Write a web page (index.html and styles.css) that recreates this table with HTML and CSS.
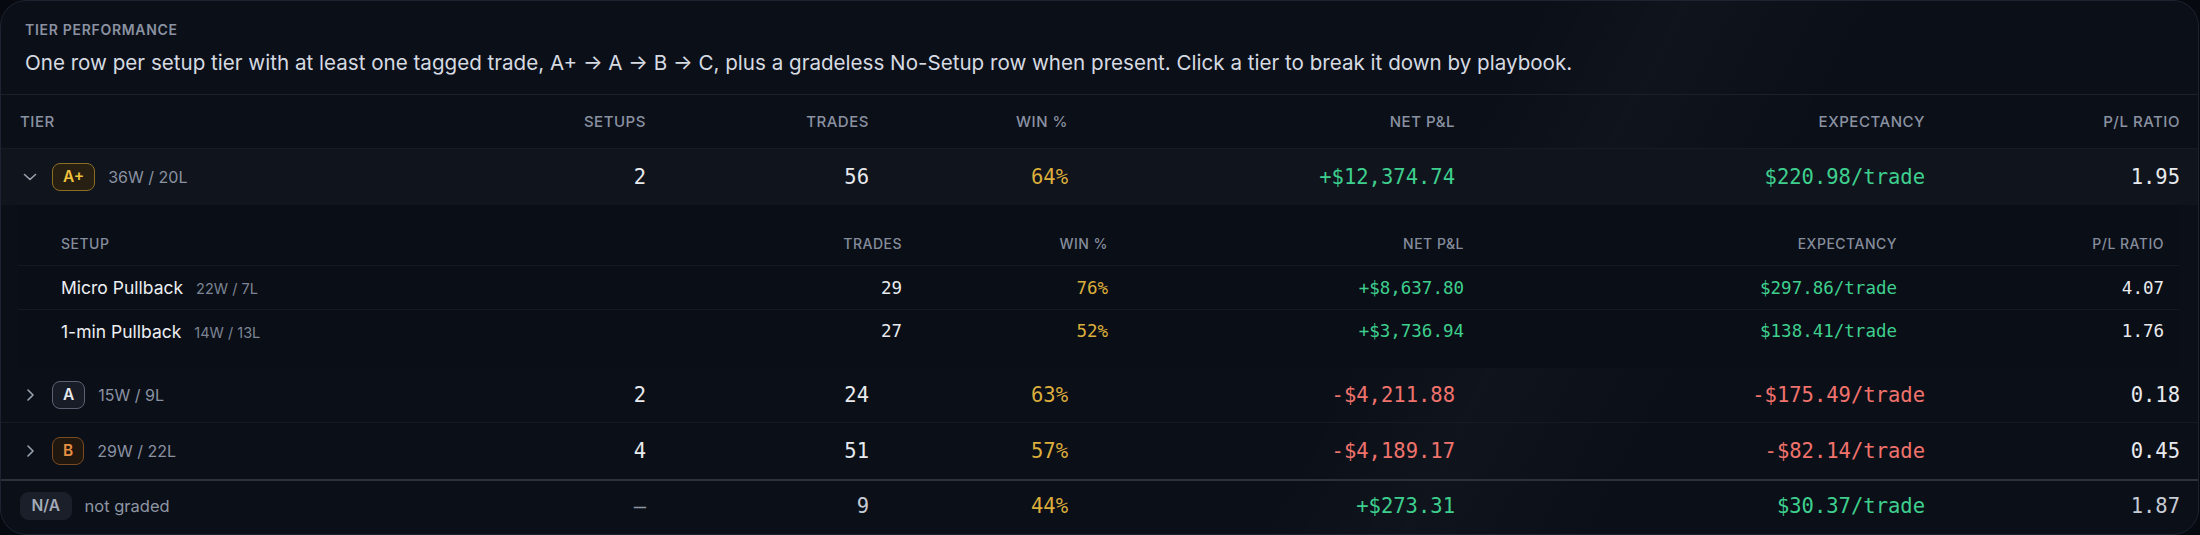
FILE: index.html
```html
<!DOCTYPE html>
<html lang="en">
<head>
<meta charset="utf-8">
<title>Tier Performance</title>
<link rel="stylesheet" href="styles.css">
</head>
<body>
<div class="card">
  <div class="card-head">
    <div class="eyebrow">Tier Performance</div>
    <p class="desc">One row per setup tier with at least one tagged trade, A+ → A → B → C, plus a gradeless No-Setup row when present. Click a tier to break it down by playbook.</p>
  </div>

  <div class="row head">
    <div class="left">Tier</div>
    <div>Setups</div>
    <div>Trades</div>
    <div>Win %</div>
    <div>Net P&amp;L</div>
    <div>Expectancy</div>
    <div>P/L Ratio</div>
  </div>

  <div class="row tier-row open">
    <div class="tier-cell">
      <svg class="chev" viewBox="0 0 16 16" width="16" height="16"><path d="M2.5 5.5 L8 10.5 L13.5 5.5" /></svg>
      <span class="badge b-aplus">A+</span>
      <span class="wl">36W / 20L</span>
    </div>
    <div class="num">2</div>
    <div class="num">56</div>
    <div class="num amber">64%</div>
    <div class="num green">+$12,374.74</div>
    <div class="num green">$220.98/trade</div>
    <div class="num">1.95</div>
  </div>

  <div class="sub">
    <div class="srow shead">
      <div class="left">Setup</div>
      <div>Trades</div>
      <div>Win %</div>
      <div>Net P&amp;L</div>
      <div>Expectancy</div>
      <div>P/L Ratio</div>
    </div>
    <div class="srow sline">
      <div class="setup"><span class="sname">Micro Pullback</span><span class="swl">22W / 7L</span></div>
      <div class="snum">29</div>
      <div class="snum amber">76%</div>
      <div class="snum green">+$8,637.80</div>
      <div class="snum green">$297.86/trade</div>
      <div class="snum">4.07</div>
    </div>
    <div class="srow sline last">
      <div class="setup"><span class="sname">1-min Pullback</span><span class="swl">14W / 13L</span></div>
      <div class="snum">27</div>
      <div class="snum amber">52%</div>
      <div class="snum green">+$3,736.94</div>
      <div class="snum green">$138.41/trade</div>
      <div class="snum">1.76</div>
    </div>
  </div>

  <div class="row tier-row bordered">
    <div class="tier-cell">
      <svg class="chev" viewBox="0 0 16 16" width="16" height="16"><path d="M6 3 L11 8 L6 13" /></svg>
      <span class="badge b-a">A</span>
      <span class="wl">15W / 9L</span>
    </div>
    <div class="num">2</div>
    <div class="num">24</div>
    <div class="num amber">63%</div>
    <div class="num red">-$4,211.88</div>
    <div class="num red">-$175.49/trade</div>
    <div class="num">0.18</div>
  </div>

  <div class="row tier-row">
    <div class="tier-cell">
      <svg class="chev" viewBox="0 0 16 16" width="16" height="16"><path d="M6 3 L11 8 L6 13" /></svg>
      <span class="badge b-b">B</span>
      <span class="wl">29W / 22L</span>
    </div>
    <div class="num">4</div>
    <div class="num">51</div>
    <div class="num amber">57%</div>
    <div class="num red">-$4,189.17</div>
    <div class="num red">-$82.14/trade</div>
    <div class="num">0.45</div>
  </div>

  <div class="row na-row">
    <div class="tier-cell">
      <span class="badge b-na">N/A</span>
      <span class="wl na-text">not graded</span>
    </div>
    <div class="num dim">–</div>
    <div class="num soft">9</div>
    <div class="num amber">44%</div>
    <div class="num green">+$273.31</div>
    <div class="num green">$30.37/trade</div>
    <div class="num soft">1.87</div>
  </div>
</div>
</body>
</html>
```

FILE: styles.css
```css
html, body {
  margin: 0;
  padding: 0;
  background: #06090f;
}

body {
  font-family: Inter, "Noto Sans", "Liberation Sans", sans-serif;
  color: #e6e8ec;
}

.card {
  box-sizing: border-box;
  width: 2199px;
  height: 535px;
  border: 1px solid #1d2330;
  border-radius: 26px;
  background:
    linear-gradient(118deg, rgba(255,255,255,0) 62%, rgba(255,255,255,0.02) 68%, rgba(255,255,255,0) 76%),
    #0b0f18;
  overflow: hidden;
}

.card-head {
  padding: 20px 24px 17px;
  border-bottom: 1px solid #1b212c;
}

.eyebrow {
  font-size: 14px;
  line-height: 18px;
  font-weight: 600;
  letter-spacing: 0.05em;
  text-transform: uppercase;
  color: #8a92a1;
}

.desc {
  margin: 10px 0 0;
  font-size: 20.6px;
  line-height: 28px;
  color: #d6dae1;
}

.row {
  display: grid;
  grid-template-columns: 446px 180px 223px 199px 387px 470px 255px;
  padding: 0 18px 0 19px;
  align-items: center;
  box-sizing: border-box;
}

.row > div {
  text-align: right;
  white-space: nowrap;
}

.row > div.left,
.row > div.tier-cell {
  text-align: left;
}

.head {
  height: 54px;
  font-size: 15px;
  font-weight: 500;
  letter-spacing: 0.035em;
  text-transform: uppercase;
  color: #8a92a2;
  border-bottom: 1px solid #161b26;
}

.tier-row {
  height: 56px;
}

.tier-row.open {
  background: #10141d;
}

.tier-row.bordered {
  height: 55px;
  border-bottom: 1px solid #151a24;
}

.na-row {
  height: 54px;
  border-top: 2px solid #2b323e;
  padding-bottom: 2px;
}

.tier-cell {
  display: flex;
  align-items: center;
}

.chev {
  width: 16px;
  height: 16px;
  margin-left: 2px;
  margin-right: 14px;
  fill: none;
  stroke: #9aa2b0;
  stroke-width: 1.6;
  stroke-linecap: round;
  stroke-linejoin: round;
}

.badge {
  display: inline-flex;
  align-items: center;
  box-sizing: border-box;
  height: 28px;
  padding: 0 10px;
  border-radius: 8px;
  border: 1.5px solid transparent;
  font-size: 15.5px;
  font-weight: 600;
  line-height: 1;
}

.b-aplus {
  border-color: #8a6e22;
  background: #272012;
  color: #f1c23d;
}

.b-a {
  border-color: #5a6272;
  background: #171c27;
  color: #e6e8ec;
}

.b-b {
  border-color: #7a4a23;
  background: #20170f;
  color: #e58f42;
}

.b-na {
  border-color: #1a1f29;
  background: #1a1f29;
  color: #a3abb8;
  padding: 0 10.5px;
}

.wl {
  margin-left: 13px;
  font-size: 16px;
  color: #8a92a1;
}

.na-text {
  font-size: 16.5px;
  color: #8e96a4;
}

.num {
  font-family: "DejaVu Sans Mono", "Liberation Mono", monospace;
  font-size: 20.5px;
  color: #e8eaee;
}

.amber { color: #dcae3b !important; }
.green { color: #3ecf8e !important; }
.red { color: #f0726c !important; }
.dim { color: #8d95a2 !important; }
.soft { color: #c6cbd3 !important; }

.sub {
  margin: 0 19px 0 17px;
  padding: 16px 0;
  background: #0a0e16;
}

.srow {
  display: grid;
  grid-template-columns: 639px 202px 206px 356px 433px 267px;
  align-items: center;
  box-sizing: border-box;
  padding: 0 14px 0 43px;
}

.srow > div {
  text-align: right;
  white-space: nowrap;
}

.srow > div.left,
.srow > div.setup {
  text-align: left;
}

.shead {
  height: 44px;
  font-size: 14px;
  font-weight: 500;
  letter-spacing: 0.035em;
  text-transform: uppercase;
  color: #858d9c;
}

.sline {
  height: 44px;
  border-top: 1px solid #141923;
}

.sline.last {
  height: 43px;
}

.setup {
  display: flex;
  align-items: baseline;
}

.sname {
  font-size: 17.5px;
  color: #eceef2;
}

.swl {
  margin-left: 13px;
  font-size: 14.5px;
  color: #7d8595;
}

.snum {
  font-family: "DejaVu Sans Mono", "Liberation Mono", monospace;
  font-size: 17.5px;
  color: #e8eaee;
}
```
